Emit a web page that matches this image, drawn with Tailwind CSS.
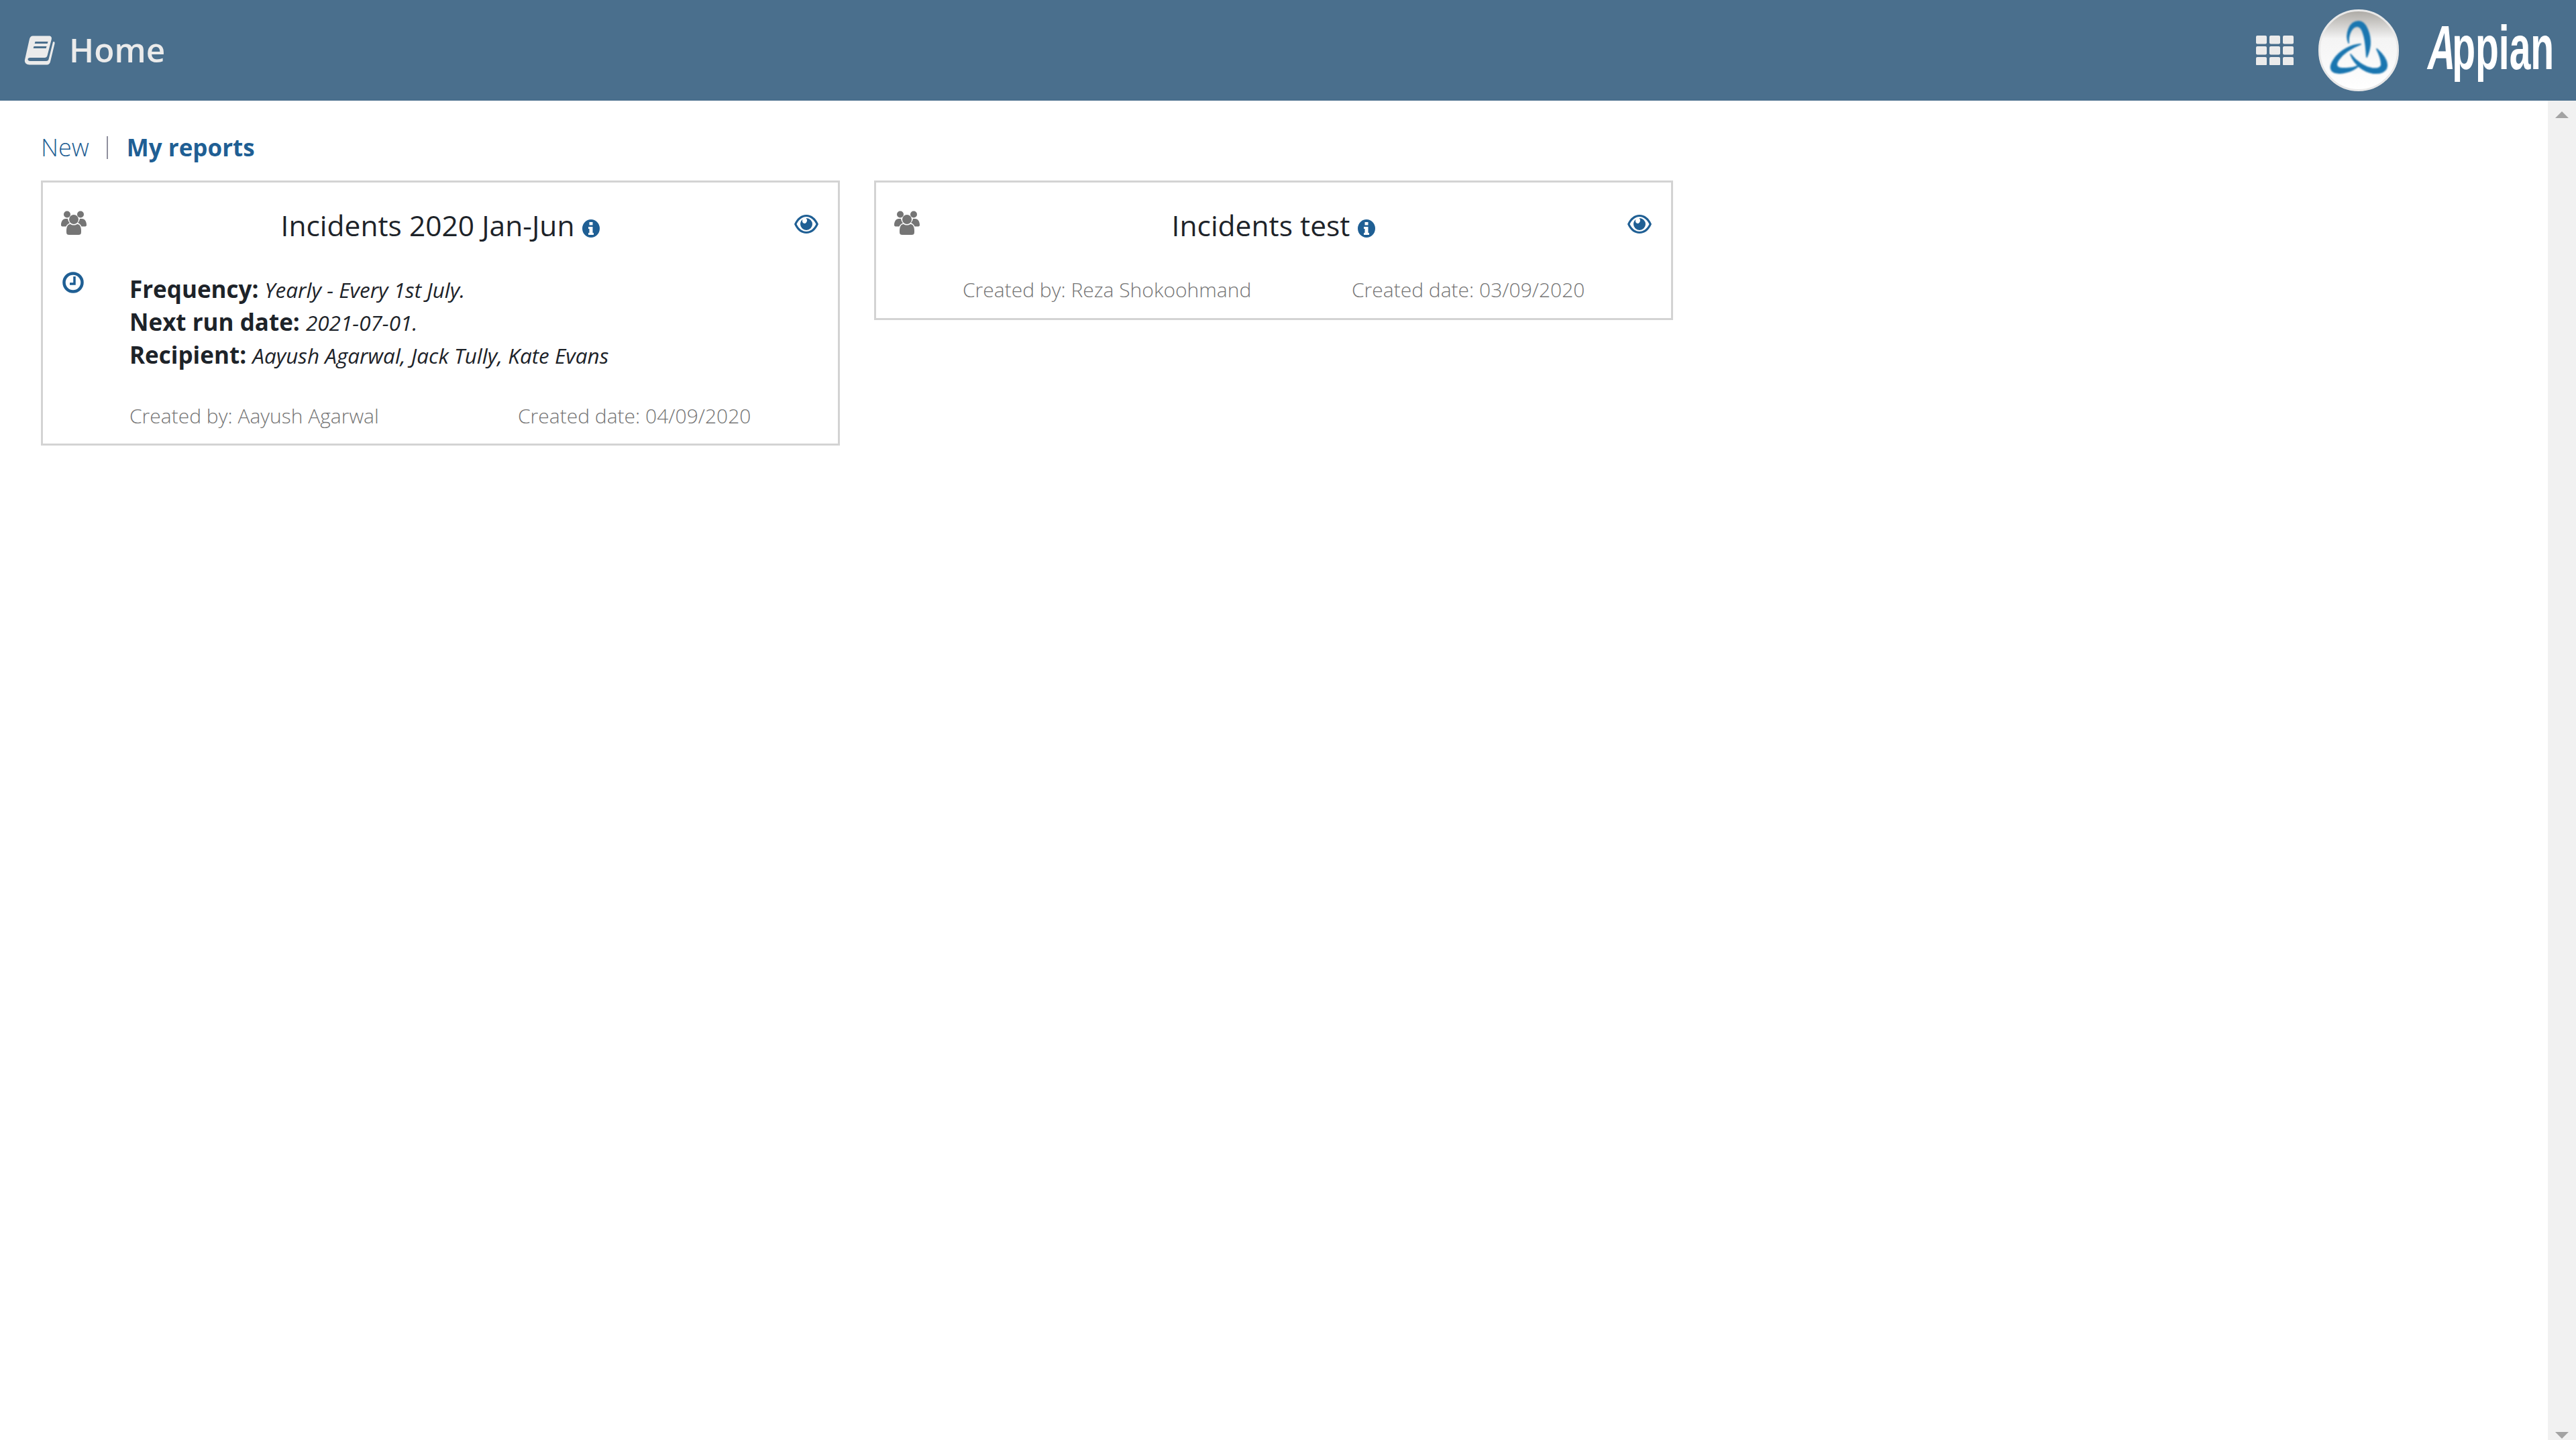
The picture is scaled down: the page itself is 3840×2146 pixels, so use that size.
<!DOCTYPE html>
<html lang="en">
  <head>
    <meta charset="UTF-8" />
    <title>Home</title>
    <script src="https://cdn.jsdelivr.net/npm/@tailwindcss/browser@4"></script>
  </head>
  <body class="h-screen overflow-hidden bg-white font-['Open_Sans',sans-serif] text-[#1d2329]">
    <div class="flex h-full flex-col">
      <!-- Header -->
      <header class="flex h-[150px] shrink-0 items-center bg-[#4a6f8d] text-[#ebebeb]">
        <svg class="ml-[36px] h-[44px] w-[48px]" viewBox="0 0 48 44" fill="currentColor">
          <path fill-rule="evenodd" d="M13 .5h24c3 0 4.500 2 3.800 5L34.500 30c-.5 2-2 3-4 3H9c-2.500 0-3.500 1-3.500 2.300S6.500 38 9 38h24c2 0 3-1 3.500-2.500L43 9.500l1.500-.5c1 .5 1.300 1.500 1 3l-6.500 27c-.6 2.600-2.500 4.500-5 4.500H8c-4.500 0-8-3-7-7.500L8 5c.6-2.500 2.500-4.500 5-4.500zM16.500 9l-.8 3h19l.8-3h-19zm-2 7l-.8 3h19l.8-3h-19z" />
        </svg>
        <h1 class="ml-[19px] text-[49.500px] font-semibold leading-none">Home</h1>
        <div class="ml-auto flex items-center">
          <svg class="h-[44px] w-[56px]" viewBox="0 0 56 44" fill="currentColor">
            <rect x="0" y="0" width="16" height="12.500" rx="2" />
            <rect x="20" y="0" width="16" height="12.500" rx="2" />
            <rect x="40" y="0" width="16" height="12.500" rx="2" />
            <rect x="0" y="16" width="16" height="12.500" rx="2" />
            <rect x="20" y="16" width="16" height="12.500" rx="2" />
            <rect x="40" y="16" width="16" height="12.500" rx="2" />
            <rect x="0" y="32" width="16" height="12.500" rx="2" />
            <rect x="20" y="32" width="16" height="12.500" rx="2" />
            <rect x="40" y="32" width="16" height="12.500" rx="2" />
          </svg>
          <div class="ml-[37px] flex h-[122px] w-[120px] items-center justify-center rounded-full border-[3px] border-[#e8e8e8] bg-linear-to-b from-[#aeaba6] via-[#f4f4f4] via-35% to-white">
            <svg class="h-[88px] w-[88px] blur-[0.8px]" viewBox="0 0 88 88" fill="#1a76b0" stroke="#1a76b0" stroke-width="1.800" stroke-linejoin="round">
              <path d="M29 33C24 20 30 1 44 1C55 1 62 20 61 36C60 44 58 50 56 54C55 44 55 30 51 19C49 12 46 8 42 8C34 8 28 20 29 33z" />
              <path d="M47 35C33 36 16 44 7 58C1 67 1 74 8 77C18 80 34 76 44 67C34 71 22 72 15 70C10 68 10 64 14 58C22 47 34 40 47 35z" />
              <path d="M71 42C80 50 87 60 86 68C85 76 76 79 66 78C52 76 38 66 32 50C40 60 52 69 64 71C72 72 78 70 78 65C78 58 75 50 71 42z" />
            </svg>
          </div>
          <div class="relative ml-[38px] mr-[32px] h-[92px] w-[194px]">
            <span class="absolute left-0 top-[-8px] origin-left scale-x-[0.613] whitespace-nowrap font-['Liberation_Sans',sans-serif] text-[93px] font-bold leading-[100px] text-white"><span class="inline-block origin-bottom -skew-x-12">A</span>ppian</span>
          </div>
        </div>
      </header>

      <!-- Contenu -->
      <div class="flex min-h-0 flex-1">
        <main class="flex-1 px-[61px] pt-[46px]">
          <nav class="flex h-[48px] items-center leading-[48px] text-[#1f5f94]">
            <a class="text-[36px] font-light">New</a>
            <span class="ml-[26px] h-[34px] w-[2px] bg-[#8f8f9d]"></span>
            <a class="ml-[28px] text-[35px] font-bold">My reports</a>
          </nav>
          <div class="mt-[25px] flex items-start gap-[51px]">
            <!-- Carte 1 -->
            <section class="w-[1191px] border-[3px] border-[#d3d3d3] px-[27px] pb-[21px] pt-[34px]">
              <div class="flex items-start justify-between">
                <svg class="mt-[8px] h-[36px] w-[38px] text-[#757575]" viewBox="0 0 38 36" fill="currentColor">
                  <circle cx="9" cy="5.500" r="5" />
                  <circle cx="29" cy="5.500" r="5" />
                  <circle cx="19" cy="13" r="7" />
                  <path d="M7 12h3c.5 3 1.500 5 3 6.500-2.500 1-4.500 2.500-5.500 5H2c-1.500 0-2-1-2-2.500C0 17 2 12 7 12zM28 12h3c5 0 7 5 7 9 0 1.500-.5 2.500-2 2.500h-5.500c-1-2.500-3-4.500-5.500-5.500 1.500-1.500 2.500-3.500 3-6zM14 20c1.500 1 3 1.500 5 1.500s3.500-.5 5-1.500c4 0 6 4 6 10v2c0 3-1.500 4-4 4H12c-2.500 0-4-1-4-4v-2c0-6 2-10 6-10z" />
                </svg>
                <h2 class="flex h-[60px] items-center text-[42.500px] leading-[60px]">
                  Incidents 2020 Jan-Jun
                  <svg class="ml-[12px] mt-[8px] h-[27px] w-[26px] text-[#1f5f94]" viewBox="0 0 26 27" fill="currentColor">
                    <path fill-rule="evenodd" d="M13 0a13 13.500 0 1 1 0 27a13 13.500 0 0 1 0-27zM10.500 4v4.500h5V4h-5zM9 11v3h1.500v6H9v3h8v-3h-1.500v-9H9z" />
                  </svg>
                </h2>
                <svg class="mr-[2px] mt-[13px] h-[30px] w-[36px] text-[#1f5f94]" viewBox="0 0 36 30" fill="currentColor">
                  <path fill-rule="evenodd" d="M18 1c8 0 14 5 18 14-4 9-10 14-18 14S4 24 0 15C4 6 10 1 18 1zm0 3C12 4 7 8 3.500 15 7 22 12 26 18 26s11-4 14.500-11C29 8 24 4 18 4zm0 2a9 9 0 1 1-9 9c0-3 1.500-5.500 3.500-7.200-.3 1-.5 1.700-.5 2.700 0 2 1.500 3.500 3.500 3.500S19 11.500 19 9.500c0-1.200-.6-2.500-1.500-3.500H18z" />
                </svg>
              </div>
              <div class="mt-[40px] flex items-start">
                <svg class="ml-[2px] mt-[-2px] h-[34px] w-[32px] text-[#1f5f94]" viewBox="0 0 32 34" fill="none" stroke="currentColor">
                  <circle cx="16" cy="17" r="13.500" stroke-width="4.500" />
                  <path d="M18 8v11h-7" stroke-width="3.500" />
                </svg>
                <div class="ml-[68px] text-[35px]">
                  <p class="h-[49px] leading-[49px]"><b class="font-bold">Frequency:</b> <i class="text-[31.500px]">Yearly - Every 1st July.</i></p>
                  <p class="h-[49px] leading-[49px]"><b class="font-bold">Next run date:</b> <i class="text-[31.500px]">2021-07-01.</i></p>
                  <p class="h-[49px] leading-[49px]"><b class="font-bold">Recipient:</b> <i class="text-[31.500px]">Aayush Agarwal, Jack Tully, Kate Evans</i></p>
                </div>
              </div>
              <div class="mt-[47px] flex pl-[102px] text-[30px] font-light leading-[40px] text-[#757575]">
                <span class="w-[579px]">Created by: Aayush Agarwal</span>
                <span>Created date: 04/09/2020</span>
              </div>
            </section>

            <!-- Carte 2 -->
            <section class="w-[1191px] border-[3px] border-[#d3d3d3] px-[27px] pb-[22px] pt-[34px]">
              <div class="flex items-start justify-between">
                <svg class="mt-[8px] h-[36px] w-[38px] text-[#757575]" viewBox="0 0 38 36" fill="currentColor">
                  <circle cx="9" cy="5.500" r="5" />
                  <circle cx="29" cy="5.500" r="5" />
                  <circle cx="19" cy="13" r="7" />
                  <path d="M7 12h3c.5 3 1.500 5 3 6.500-2.500 1-4.500 2.500-5.500 5H2c-1.500 0-2-1-2-2.500C0 17 2 12 7 12zM28 12h3c5 0 7 5 7 9 0 1.500-.5 2.500-2 2.500h-5.500c-1-2.500-3-4.500-5.500-5.500 1.500-1.500 2.500-3.500 3-6zM14 20c1.500 1 3 1.500 5 1.500s3.500-.5 5-1.500c4 0 6 4 6 10v2c0 3-1.500 4-4 4H12c-2.500 0-4-1-4-4v-2c0-6 2-10 6-10z" />
                </svg>
                <h2 class="flex h-[60px] items-center text-[42.500px] leading-[60px]">
                  Incidents test
                  <svg class="ml-[12px] mt-[8px] h-[27px] w-[26px] text-[#1f5f94]" viewBox="0 0 26 27" fill="currentColor">
                    <path fill-rule="evenodd" d="M13 0a13 13.500 0 1 1 0 27a13 13.500 0 0 1 0-27zM10.500 4v4.500h5V4h-5zM9 11v3h1.500v6H9v3h8v-3h-1.500v-9H9z" />
                  </svg>
                </h2>
                <svg class="mr-[2px] mt-[13px] h-[30px] w-[36px] text-[#1f5f94]" viewBox="0 0 36 30" fill="currentColor">
                  <path fill-rule="evenodd" d="M18 1c8 0 14 5 18 14-4 9-10 14-18 14S4 24 0 15C4 6 10 1 18 1zm0 3C12 4 7 8 3.500 15 7 22 12 26 18 26s11-4 14.500-11C29 8 24 4 18 4zm0 2a9 9 0 1 1-9 9c0-3 1.500-5.500 3.500-7.200-.3 1-.5 1.700-.5 2.700 0 2 1.500 3.500 3.500 3.500S19 11.500 19 9.500c0-1.200-.6-2.500-1.500-3.500H18z" />
                </svg>
              </div>
              <div class="mt-[46px] flex pl-[102px] text-[30px] font-light leading-[40px] text-[#757575]">
                <span class="w-[580px]">Created by: Reza Shokoohmand</span>
                <span>Created date: 03/09/2020</span>
              </div>
            </section>
          </div>
        </main>

        <!-- Barre de défilement -->
        <div class="flex w-[42px] shrink-0 flex-col items-center justify-between bg-[#f1f1f1] pb-[2px] pt-[16px]">
          <span class="h-0 w-0 border-x-[10px] border-b-[10px] border-x-transparent border-b-[#a3a3a3]"></span>
          <span class="h-0 w-0 border-x-[10px] border-t-[10px] border-x-transparent border-t-[#a3a3a3]"></span>
        </div>
      </div>
    </div>
  </body>
</html>
